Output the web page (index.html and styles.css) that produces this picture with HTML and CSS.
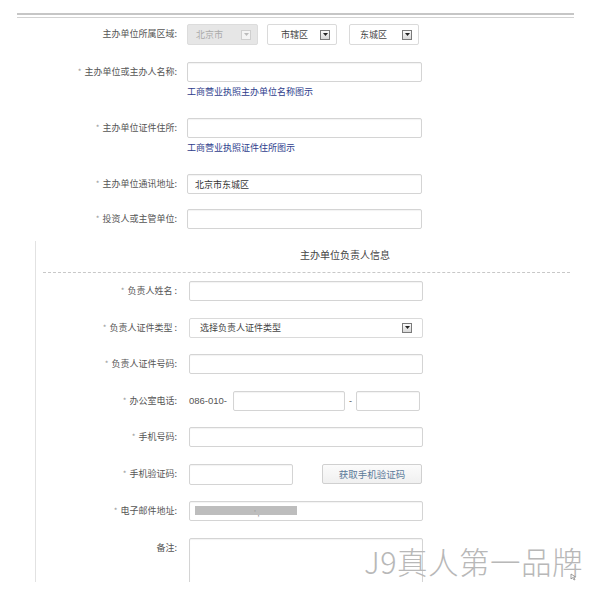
FILE: index.html
```html
<!DOCTYPE html>
<html lang="zh-CN">
<head>
<meta charset="utf-8">
<title>主办单位信息</title>
<link rel="stylesheet" href="styles.css">
</head>
<body>
<div class="page">
  <div class="topline"></div>

  <div class="sec1">
    <div class="row">
      <div class="label">主办单位所属区域:</div>
      <div class="field selects">
        <div class="select select-disabled"><span class="sel-text">北京市</span><span class="arrow"><svg viewBox="0 0 5 3" width="5" height="3"><polygon points="0,0 5,0 2.5,3" fill="#bbb"/></svg></span></div>
        <div class="select select-2"><span class="sel-text">市辖区</span><span class="arrow"><svg viewBox="0 0 5 3" width="5" height="3"><polygon points="0,0 5,0 2.5,3" fill="#222"/></svg></span></div>
        <div class="select select-3"><span class="sel-text">东城区</span><span class="arrow"><svg viewBox="0 0 5 3" width="5" height="3"><polygon points="0,0 5,0 2.5,3" fill="#222"/></svg></span></div>
      </div>
    </div>

    <div class="row">
      <div class="label"><span class="star">*</span>主办单位或主办人名称:</div>
      <div class="field">
        <input class="text-input" type="text">
        <div class="hint">工商营业执照主办单位名称图示</div>
      </div>
    </div>

    <div class="row">
      <div class="label"><span class="star">*</span>主办单位证件住所:</div>
      <div class="field">
        <input class="text-input" type="text">
        <div class="hint">工商营业执照证件住所图示</div>
      </div>
    </div>

    <div class="row">
      <div class="label"><span class="star">*</span>主办单位通讯地址:</div>
      <div class="field">
        <input class="text-input" type="text" value="北京市东城区">
      </div>
    </div>

    <div class="row row-last">
      <div class="label"><span class="star">*</span>投资人或主管单位:</div>
      <div class="field">
        <input class="text-input" type="text">
      </div>
    </div>
  </div>

  <div class="sec2">
    <div class="sec-title">主办单位负责人信息</div>
    <div class="dashed"></div>

    <div class="row2">
      <div class="label2"><span class="star">*</span>负责人姓名 :</div>
      <input class="text-input wide" type="text">
    </div>

    <div class="row2">
      <div class="label2"><span class="star">*</span>负责人证件类型 :</div>
      <div class="select select-wide"><span class="sel-text">选择负责人证件类型</span><span class="arrow"><svg viewBox="0 0 5 3" width="5" height="3"><polygon points="0,0 5,0 2.5,3" fill="#222"/></svg></span></div>
    </div>

    <div class="row2">
      <div class="label2"><span class="star">*</span>负责人证件号码:</div>
      <input class="text-input wide" type="text">
    </div>

    <div class="row2">
      <div class="label2"><span class="star">*</span>办公室电话:</div>
      <div class="phone">
        <span class="prefix">086-010-</span>
        <input class="text-input phone-main" type="text">
        <span class="dash">-</span>
        <input class="text-input phone-ext" type="text">
      </div>
    </div>

    <div class="row2">
      <div class="label2"><span class="star">*</span>手机号码:</div>
      <input class="text-input wide" type="text">
    </div>

    <div class="row2">
      <div class="label2"><span class="star">*</span>手机验证码:</div>
      <div class="verify">
        <input class="text-input code" type="text">
        <button class="get-code" type="button">获取手机验证码</button>
      </div>
    </div>

    <div class="row2">
      <div class="label2"><span class="star">*</span>电子邮件地址:</div>
      <div class="email">
        <span class="redact"></span>
        <span class="redact-tail">' ,</span>
      </div>
    </div>

    <div class="row2">
      <div class="label2">备注:</div>
      <textarea class="memo"></textarea>
    </div>
  </div>
</div>
<div class="watermark">J9真人第一品牌</div>
<svg class="cursor" viewBox="0 0 8 8" width="8" height="8"><path d="M1 1 L1 6 L2.5 4.6 L4 7 L5 6.5 L3.6 4.1 L5.6 4 Z" fill="#fff" stroke="#777" stroke-width="0.7"/></svg>
</body>
</html>
```

FILE: styles.css
```css
* { box-sizing: border-box; }

html, body {
  margin: 0;
  padding: 0;
  background: #fff;
}

body {
  position: relative;
  font-family: "Noto Sans CJK SC", "Noto Sans", sans-serif;
  font-size: 9px;
  color: #555;
}

.page {
  width: 595px;
  height: 582px;
  overflow: hidden;
}

.topline {
  margin: 13px 21px 0 17px;
  height: 5px;
  border-top: 2px solid #c6c6c6;
  border-bottom: 1px solid #d2d2d2;
}

/* ---------- section 1 ---------- */
.sec1 {
  padding-top: 6px;
}

.row {
  display: flex;
  align-items: flex-start;
  margin-top: 17px;
}

.row:first-child {
  margin-top: 0;
}

.row-last {
  margin-top: 15px;
}

.label {
  width: 177px;
  flex: none;
  text-align: right;
  line-height: 20px;
  white-space: nowrap;
}

.field {
  margin-left: 10px;
}

.star {
  color: #999;
  margin-right: 3px;
  font-size: 8px;
}

.selects {
  display: flex;
  height: 21px;
}

.select {
  display: flex;
  align-items: center;
  height: 21px;
  border: 1px solid #dadada;
  border-radius: 2px;
  background: #fff;
  color: #444;
  width: 71px;
}

.select-disabled {
  background: #e6e6e6;
  border-color: #dcdcdc;
  color: #aaa;
}

.select-disabled .sel-text {
  padding-left: 8px;
}

.select-2 {
  margin-left: 9px;
  width: 70px;
}

.select-2 .sel-text {
  padding-left: 13px;
}

.select-3 {
  margin-left: 12px;
  width: 70px;
}

.select-3 .sel-text {
  padding-left: 10px;
}

.sel-text {
  flex: 1;
  white-space: nowrap;
}

.arrow {
  display: flex;
  align-items: center;
  justify-content: center;
  width: 10px;
  height: 10px;
  margin-right: 6px;
  border: 1px solid #7a7a7a;
  background: linear-gradient(#fafafa, #d8d8d8);
}

.select-disabled .arrow {
  border-color: #cfcfcf;
  background: #f4f4f4;
}

.text-input {
  display: block;
  width: 235px;
  height: 20px;
  margin: 0;
  padding: 0 0 0 7px;
  border: 1px solid #d4d4d4;
  border-radius: 2px;
  box-shadow: inset 0 1px 1px rgba(0, 0, 0, 0.05);
  font-family: "Noto Sans CJK SC", "Noto Sans", sans-serif;
  font-size: 9px;
  color: #333;
  background: #fff;
  outline: none;
}

.hint {
  margin-top: 4px;
  margin-bottom: 3px;
  line-height: 12px;
  color: #2e3d8c;
  white-space: nowrap;
}

/* ---------- section 2 ---------- */
.sec2 {
  margin-top: 12px;
  margin-left: 35px;
  border-left: 1px solid #e2e2e2;
  padding-bottom: 40px;
}

.sec-title {
  padding-top: 7px;
  padding-left: 264px;
  line-height: 14px;
  font-size: 10px;
  color: #444;
  white-space: nowrap;
}

.dashed {
  margin: 10px 25px 0 7px;
  border-top: 1px dashed #c8c8c8;
}

.row2 {
  display: flex;
  align-items: flex-start;
  margin-top: 16.5px;
}

.dashed + .row2 {
  margin-top: 8px;
}

.label2 {
  width: 141px;
  flex: none;
  text-align: right;
  line-height: 20px;
  white-space: nowrap;
}

.row2 > .text-input,
.row2 > .select,
.row2 > .phone,
.row2 > .verify,
.row2 > .email,
.row2 > .memo {
  margin-left: 12px;
}

.wide {
  width: 234px;
}

.select-wide {
  width: 234px;
  height: 20px;
  color: #444;
}

.select-wide .sel-text {
  padding-left: 10px;
}

.select-wide .arrow {
  margin-right: 10px;
}

.phone {
  display: flex;
  align-items: center;
  height: 20px;
}

.prefix {
  width: 44px;
  color: #555;
  font-family: "Liberation Sans", sans-serif;
  font-size: 9.5px;
  white-space: nowrap;
}

.phone-main {
  width: 112px;
}

.dash {
  width: 11px;
  text-align: center;
  font-family: "Liberation Sans", sans-serif;
}

.phone-ext {
  width: 64px;
}

.verify {
  display: flex;
  align-items: flex-start;
}

.code {
  width: 104px;
  height: 21px;
}

.get-code {
  margin: 0 0 0 29px;
  width: 100px;
  height: 20px;
  padding: 0;
  border: 1px solid #d0d0d0;
  border-radius: 2px;
  background: linear-gradient(#fbfbfb, #f0f0f0);
  font-family: "Noto Sans CJK SC", "Noto Sans", sans-serif;
  font-size: 9.5px;
  color: #5b7a99;
}

.email {
  position: relative;
  display: flex;
  align-items: flex-start;
  width: 234px;
  height: 20px;
  border: 1px solid #d4d4d4;
  border-radius: 2px;
  box-shadow: inset 0 1px 1px rgba(0, 0, 0, 0.05);
  padding: 4px 0 0 5px;
}

.redact {
  display: block;
  width: 102px;
  height: 9px;
  background: #bdbdbd;
}

.redact-tail {
  position: absolute;
  left: 64px;
  top: 7px;
  font-size: 7px;
  line-height: 8px;
  color: #999;
}

.memo {
  display: block;
  width: 234px;
  height: 70px;
  border: 1px solid #d4d4d4;
  border-radius: 2px;
  resize: none;
  box-shadow: inset 0 1px 1px rgba(0, 0, 0, 0.05);
  background: #fff;
}

/* ---------- overlays ---------- */
.watermark {
  position: absolute;
  left: 364px;
  top: 541px;
  font-size: 30.5px;
  font-weight: 300;
  line-height: 40px;
  color: #b8b8b8;
  white-space: nowrap;
  letter-spacing: 0.5px;
}

.cursor {
  position: absolute;
  left: 570px;
  top: 573px;
}
```
